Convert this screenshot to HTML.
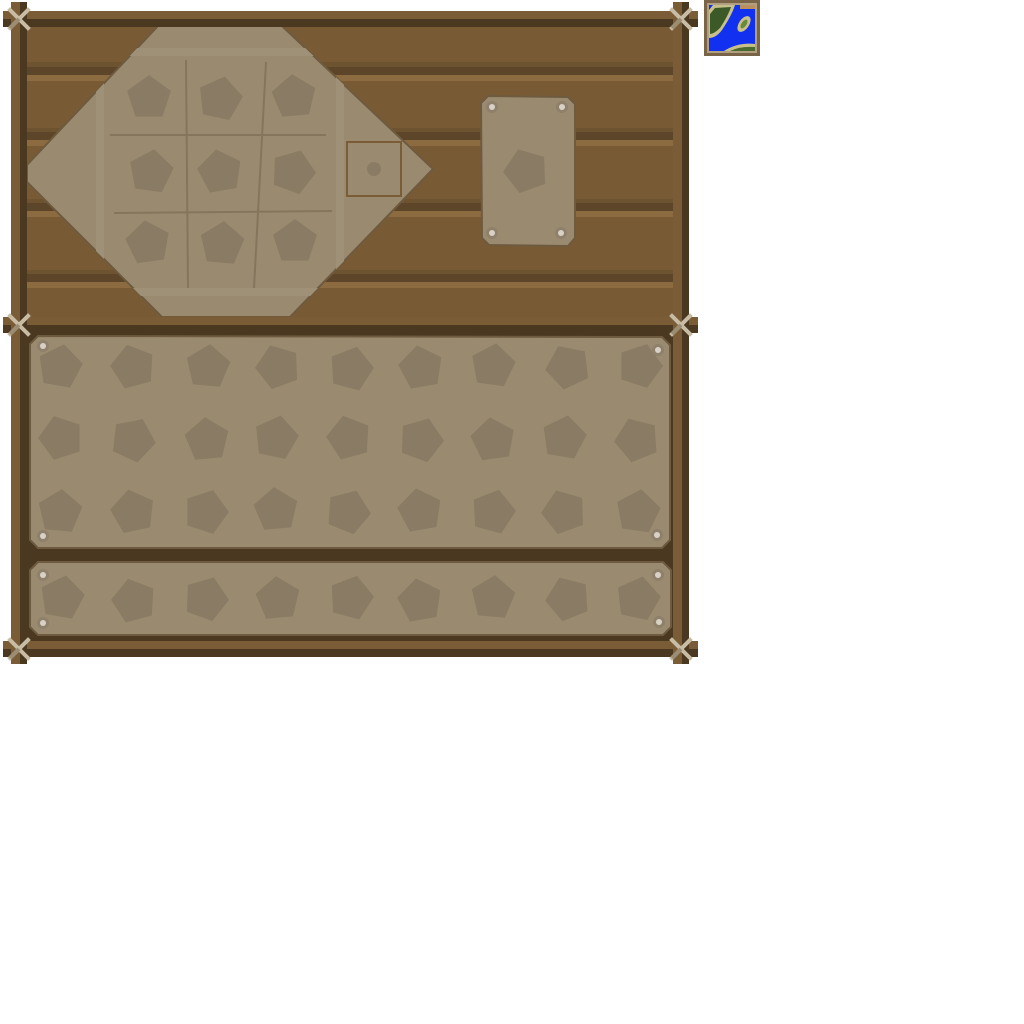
<!DOCTYPE html>
<html><head><style>html,body{margin:0;padding:0;background:#fff;width:1024px;height:1024px;overflow:hidden}svg{display:block}</style></head>
<body>
<svg width="1024" height="1024" viewBox="0 0 1024 1024" xmlns="http://www.w3.org/2000/svg">
<defs>
<polygon id="p" points="0,-23 21.9,-7.1 13.5,18.6 -13.5,18.6 -21.9,-7.1" fill="#8a7c64"/>
<g id="x"><path d="M-9,-9 L9,9 M9,-9 L-9,9" stroke="#c8bca4" stroke-width="4" stroke-linecap="square"/><path d="M-9,9 L0,0" stroke="#9a8d74" stroke-width="4"/></g>
<g id="bolt"><circle r="6" fill="#8e806a"/><circle r="3" fill="#d8d2c6"/></g>
<clipPath id="dc"><polygon points="158,26 282,26 433,169 290,317 162,317 27,182 27,165"/></clipPath>
</defs>
<rect x="27" y="26" width="646" height="291" fill="#785b35"/>
<g>
<rect x="27" y="62" width="646" height="5" fill="#6e5330"/><rect x="27" y="67" width="646" height="8" fill="#5c4529"/><rect x="27" y="75" width="646" height="6" fill="#8c6b40"/>
<rect x="27" y="128" width="646" height="4" fill="#6e5330"/><rect x="27" y="132" width="646" height="8" fill="#5c4529"/><rect x="27" y="140" width="646" height="6" fill="#8c6b40"/>
<rect x="27" y="199" width="646" height="4" fill="#6e5330"/><rect x="27" y="203" width="646" height="8" fill="#5c4529"/><rect x="27" y="211" width="646" height="6" fill="#8c6b40"/>
<rect x="27" y="270" width="646" height="4" fill="#6e5330"/><rect x="27" y="274" width="646" height="8" fill="#5c4529"/><rect x="27" y="282" width="646" height="6" fill="#8c6b40"/>
</g>
<polygon points="158,26 282,26 433,169 290,317 162,317 27,182 27,165" fill="#9a8b70" stroke="#6e5a3e" stroke-width="2"/>
<rect x="100" y="52" width="240" height="240" fill="none" stroke="#9f9177" stroke-width="8" clip-path="url(#dc)"/>
<g stroke="#84755c" stroke-width="2" fill="none">
<line x1="110" y1="135" x2="326" y2="135"/><line x1="114" y1="213" x2="332" y2="211"/>
<line x1="186" y1="60" x2="188" y2="288"/><line x1="266" y1="62" x2="254" y2="288"/>
</g>
<use href="#p" transform="translate(149,98)"/><use href="#p" transform="translate(220,99) rotate(12)"/><use href="#p" transform="translate(294,97) rotate(-5)"/>
<use href="#p" transform="translate(151,172) rotate(8)"/><use href="#p" transform="translate(220,172) rotate(-10)"/><use href="#p" transform="translate(293,172) rotate(20)"/>
<use href="#p" transform="translate(148,243) rotate(-8)"/><use href="#p" transform="translate(222,244) rotate(5)"/><use href="#p" transform="translate(295,242) rotate(0)"/>
<rect x="347" y="142" width="54" height="54" fill="none" stroke="#7a5c36" stroke-width="2"/>
<circle cx="374" cy="169" r="7" fill="#8a7c64"/>
<polygon points="488,96 568,97 575,104 575,238 568,246 489,245 482,238 481,103" fill="#9a8b70" stroke="#6e5a3e" stroke-width="2"/>
<use href="#p" transform="translate(526,171) rotate(-20)"/>
<use href="#bolt" transform="translate(492,107)"/><use href="#bolt" transform="translate(562,107)"/><use href="#bolt" transform="translate(492,233)"/><use href="#bolt" transform="translate(561,233)"/>
<rect x="27" y="333" width="646" height="308" fill="#4a3820"/>
<polygon points="38,336 662,337 670,345 670,540 662,548 38,548 30,540 30,344" fill="#9a8b70" stroke="#6e5a3e" stroke-width="2"/>
<polygon points="38,562 663,562 671,570 671,627 663,635 38,635 30,627 30,570" fill="#9a8b70" stroke="#6e5a3e" stroke-width="2"/>
<g>
<use href="#p" transform="translate(60,367) rotate(10)"/><use href="#p" transform="translate(133,367) rotate(-15)"/><use href="#p" transform="translate(208,367) rotate(5)"/><use href="#p" transform="translate(278,367) rotate(-20)"/><use href="#p" transform="translate(351,369) rotate(15)"/><use href="#p" transform="translate(421,368) rotate(-10)"/><use href="#p" transform="translate(493,366) rotate(8)"/><use href="#p" transform="translate(568,367) rotate(-25)"/><use href="#p" transform="translate(640,366) rotate(18)"/>
<use href="#p" transform="translate(61,438) rotate(-18)"/><use href="#p" transform="translate(133,440) rotate(25)"/><use href="#p" transform="translate(207,440) rotate(-5)"/><use href="#p" transform="translate(276,438) rotate(12)"/><use href="#p" transform="translate(349,438) rotate(-15)"/><use href="#p" transform="translate(421,440) rotate(20)"/><use href="#p" transform="translate(493,440) rotate(-8)"/><use href="#p" transform="translate(564,438) rotate(10)"/><use href="#p" transform="translate(637,440) rotate(-22)"/>
<use href="#p" transform="translate(60,512) rotate(5)"/><use href="#p" transform="translate(133,512) rotate(-12)"/><use href="#p" transform="translate(206,512) rotate(18)"/><use href="#p" transform="translate(276,510) rotate(-5)"/><use href="#p" transform="translate(348,512) rotate(22)"/><use href="#p" transform="translate(420,511) rotate(-10)"/><use href="#p" transform="translate(493,512) rotate(15)"/><use href="#p" transform="translate(564,512) rotate(-20)"/><use href="#p" transform="translate(638,512) rotate(8)"/>
<use href="#p" transform="translate(62,598) rotate(10)"/><use href="#p" transform="translate(134,601) rotate(-15)"/><use href="#p" transform="translate(206,599) rotate(20)"/><use href="#p" transform="translate(278,599) rotate(-5)"/><use href="#p" transform="translate(351,598) rotate(15)"/><use href="#p" transform="translate(420,601) rotate(-10)"/><use href="#p" transform="translate(493,598) rotate(5)"/><use href="#p" transform="translate(568,599) rotate(-22)"/><use href="#p" transform="translate(638,599) rotate(12)"/>
</g>
<use href="#bolt" transform="translate(43,346)"/><use href="#bolt" transform="translate(658,350)"/><use href="#bolt" transform="translate(43,536)"/><use href="#bolt" transform="translate(657,535)"/>
<use href="#bolt" transform="translate(43,575)"/><use href="#bolt" transform="translate(658,575)"/><use href="#bolt" transform="translate(43,623)"/><use href="#bolt" transform="translate(659,622)"/>
<g>
<rect x="3" y="11" width="695" height="8" fill="#7a5c36"/><rect x="3" y="19" width="695" height="8" fill="#4a3820"/>
<rect x="3" y="317" width="695" height="8" fill="#7a5c36"/><rect x="3" y="325" width="695" height="8" fill="#4a3820"/>
<rect x="3" y="641" width="695" height="8" fill="#7a5c36"/><rect x="3" y="649" width="695" height="8" fill="#4a3820"/>
<rect x="11" y="2" width="9" height="662" fill="#7a5c36"/><rect x="20" y="2" width="7" height="662" fill="#4a3820"/>
<rect x="673" y="2" width="9" height="662" fill="#7a5c36"/><rect x="682" y="2" width="7" height="662" fill="#4a3820"/>
</g>
<use href="#x" transform="translate(19,19)"/><use href="#x" transform="translate(681,19)"/>
<use href="#x" transform="translate(19,325)"/><use href="#x" transform="translate(681,325)"/>
<use href="#x" transform="translate(19,649)"/><use href="#x" transform="translate(681,649)"/>
<rect x="704" y="0" width="56" height="56" fill="#7a6448"/>
<rect x="707" y="3" width="50" height="50" fill="#b0a080"/>
<rect x="709" y="5" width="46" height="46" fill="#1230f0"/>
<path d="M713,5 L735,5 Q732,15 722,30 Q716,38 709,38 L709,10 Z" fill="#c8c08a"/>
<path d="M715,8 L731,7 Q728,16 720,28 Q714,34 710,34 L710,14 Z" fill="#3c5a28"/>
<ellipse cx="744" cy="24" rx="5" ry="9" transform="rotate(35 744 24)" fill="#c8c08a"/>
<ellipse cx="744" cy="24" rx="2.5" ry="5" transform="rotate(35 744 24)" fill="#6a8a3a"/>
<path d="M724,51 Q738,42 755,44 L755,51 Z" fill="#c8c08a"/>
<path d="M730,51 Q740,46 755,47 L755,51 Z" fill="#4a6a30"/>
<rect x="740" y="5" width="15" height="4" fill="#b89060"/>
</svg>
</body></html>
